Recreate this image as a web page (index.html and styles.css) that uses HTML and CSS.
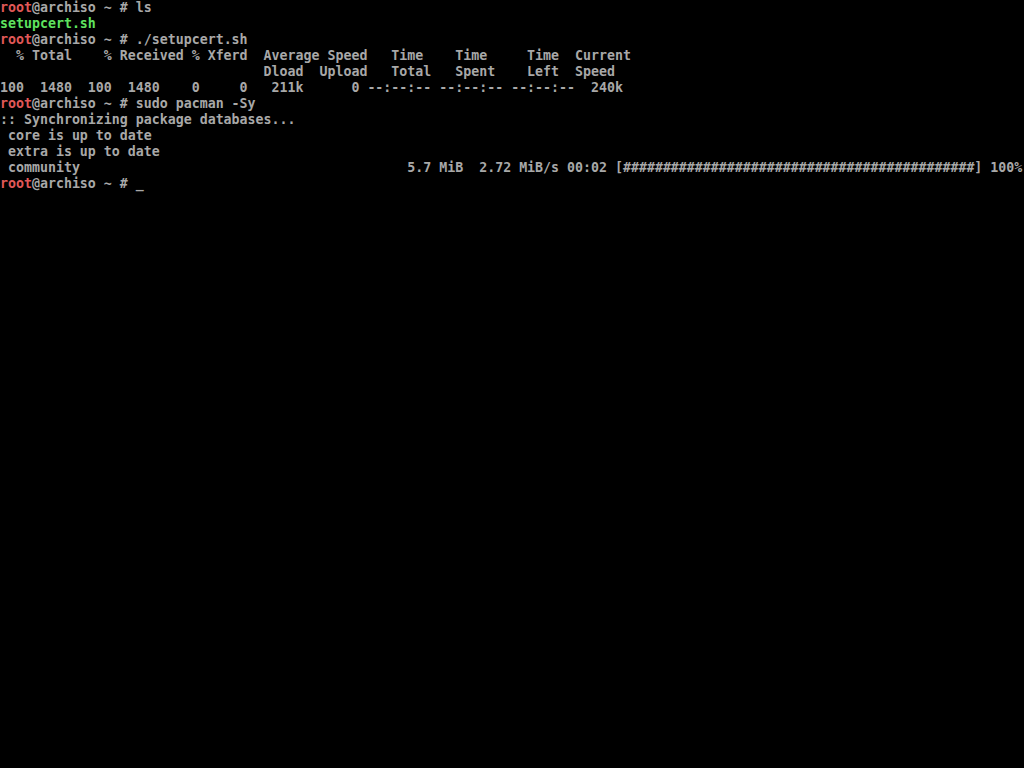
FILE: index.html
```html
<!DOCTYPE html>
<html lang="en">
<head>
    <meta charset="UTF-8">
    <title>tty1</title>
    <link rel="stylesheet" href="styles.css">
</head>
<body>
<pre class="console"><span class="user">root</span>@archiso ~ # ls
<span class="exec">setupcert.sh</span>
<span class="user">root</span>@archiso ~ # ./setupcert.sh
  % Total    % Received % Xferd  Average Speed   Time    Time     Time  Current
                                 Dload  Upload   Total   Spent    Left  Speed
100  1480  100  1480    0     0   211k      0 --:--:-- --:--:-- --:--:--  240k
<span class="user">root</span>@archiso ~ # sudo pacman -Sy
:: Synchronizing package databases...
 core is up to date
 extra is up to date
 community                                         5.7 MiB  2.72 MiB/s 00:02 [############################################] 100%
<span class="user">root</span>@archiso ~ # <span class="cursor">_</span></pre>
</body>
</html>
```

FILE: styles.css
```css
html, body {
    margin: 0;
    padding: 0;
    background: #000;
    height: 100%;
    overflow: hidden;
}
.console {
    margin: 0;
    padding: 0;
    font-family: "DejaVu Sans Mono", "Liberation Mono", monospace;
    font-size: 13.288px;
    font-weight: bold;
    line-height: 16px;
    color: #a8a8a8;
    white-space: pre;
}
.user {
    color: #e05858;
}
.exec {
    color: #5fe35f;
}
.cursor {
    color: #a8a8a8;
}
```
